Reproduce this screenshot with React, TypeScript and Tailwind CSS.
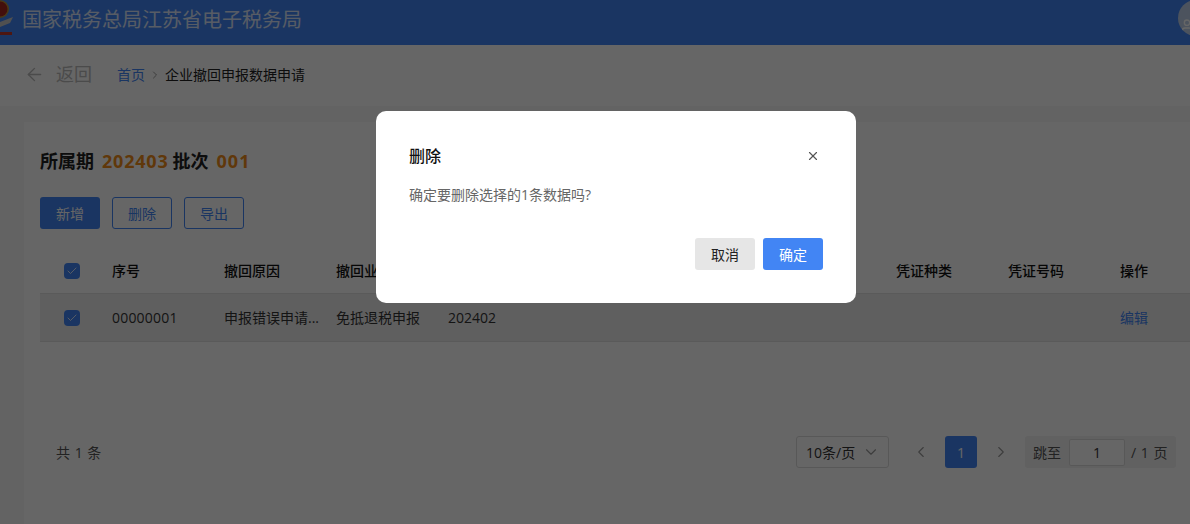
import { ArrowLeft, Check, ChevronDown, ChevronLeft, ChevronRight, User, X } from 'lucide-react';

const columns = [
  { title: '序号', width: 'w-[112px]' },
  { title: '撤回原因', width: 'w-[112px]' },
  { title: '撤回业务', width: 'w-[112px]' },
  { title: '', width: 'w-[448px]' },
  { title: '凭证种类', width: 'w-[112px]' },
  { title: '凭证号码', width: 'w-[112px]' },
  { title: '操作', width: 'w-[70px]' },
];

function Emblem() {
  return (
    <svg viewBox="0 0 22 38" className="h-[38px] w-[22px] shrink-0 self-start">
      <circle cx="0" cy="9" r="9" fill="#b8923a" />
      <circle cx="0" cy="9" r="7.5" fill="#a8261e" />
      <path d="M0 22 L13 17 L10 23 L0 27 Z" fill="#c9c9c9" />
      <path d="M0 32 h12 v3 H0 Z" fill="#c0392b" />
    </svg>
  );
}

function Checkbox() {
  return (
    <span className="flex h-4 w-4 items-center justify-center rounded-[4px] bg-[#4285f4]">
      <Check className="h-3 w-3 text-white/80" strokeWidth={2} />
    </span>
  );
}

export default function App() {
  return (
    <div className="relative h-[524px] w-[1190px] overflow-hidden bg-[#f8f8f8] font-['Open_Sans','Noto_Sans_CJK_SC',sans-serif] text-[14px] text-[#333]">
      <header className="flex h-[45px] justify-between bg-[#4285f4]">
        <div className="flex items-center">
          <Emblem />
          <span className="pb-2 font-['Noto_Sans_CJK_SC',sans-serif] text-[20px] text-white opacity-80">国家税务总局江苏省电子税务局</span>
        </div>
        <div className="mr-[-24px] flex h-9 w-9 items-center justify-center overflow-hidden rounded-full bg-[#bfd0ea]">
          <User className="h-4 w-4 -translate-x-[9px] translate-y-2 text-white" />
        </div>
      </header>

      <div className="flex h-[61px] items-center bg-white pb-[2px] pl-6">
        <ArrowLeft className="h-[21px] w-[21px] text-[#bbb]" strokeWidth={1.6} />
        <span className="ml-[11px] text-[18px] text-[#bbb]">返回</span>
        <span className="ml-[25px] text-[#4285f4]">首页</span>
        <ChevronRight className="mx-1 h-3 w-3 text-[#999]" />
        <span className="text-[#222]">企业撤回申报数据申请</span>
      </div>

      <main className="ml-6 mt-4 h-[402px] bg-white pl-4 pt-[26px]">
        <div className="flex h-[26px] items-center text-[18px] font-bold leading-[26px] text-[#222]">
          <span>所属期</span>
          <span className="ml-2 tracking-[0.8px] text-[#f08c1a]">202403</span>
          <span className="ml-1">批次</span>
          <span className="ml-2 tracking-[1px] text-[#f08c1a]">001</span>
        </div>

        <div className="mt-[23px] flex gap-3">
          <button className="h-8 w-[60px] rounded-[3px] bg-[#4285f4] text-white">新增</button>
          <button className="h-8 w-[60px] rounded-[3px] border border-[#4285f4] text-[#4285f4]">删除</button>
          <button className="h-8 w-[60px] rounded-[3px] border border-[#4285f4] text-[#4285f4]">导出</button>
        </div>

        <div className="mt-[19px]">
          <div className="flex h-[46px] items-center border-b border-[#e0e0e0] font-medium text-[#111]">
            <div className="w-[72px] pl-6">
              <Checkbox />
            </div>
            {columns.map((col, i) => (
              <div key={i} className={col.width}>
                {col.title}
              </div>
            ))}
          </div>
          <div className="flex h-[48px] items-center border-b border-[#e0e0e0] bg-[#ededed]">
            <div className="w-[72px] pl-6">
              <Checkbox />
            </div>
            <div className="w-[112px] tracking-[0.2px]">00000001</div>
            <div className="w-[112px]">申报错误申请...</div>
            <div className="w-[112px]">免抵退税申报</div>
            <div className="w-[448px]">202402</div>
            <div className="w-[224px]" />
            <div className="text-[#4285f4]">编辑</div>
          </div>
        </div>

        <div className="mt-[94px] flex h-8 items-center pl-4 pr-[14px]">
          <span className="text-[#555] [word-spacing:1px]">共 1 条</span>
          <div className="ml-auto flex h-8 w-[93px] items-center justify-between rounded-[3px] border border-[#ddd] pl-[9px] pr-2 text-[#333]">
            <span>10条/页</span>
            <ChevronDown className="h-[18px] w-[18px] text-[#999]" strokeWidth={1.5} />
          </div>
          <div className="ml-4 flex h-8 w-8 items-center justify-center">
            <ChevronLeft className="h-[18px] w-[18px] text-[#999]" strokeWidth={1.5} />
          </div>
          <div className="ml-2 flex h-8 w-8 items-center justify-center rounded-[3px] bg-[#4285f4] text-white">1</div>
          <div className="ml-2 flex h-8 w-8 items-center justify-center">
            <ChevronRight className="h-[18px] w-[18px] text-[#999]" strokeWidth={1.5} />
          </div>
          <div className="ml-2 flex h-8 w-[151px] items-center rounded-[3px] bg-[#f2f2f2] pl-2 text-[#555]">
            <span>跳至</span>
            <div className="ml-2 mr-[6px] flex h-[27px] w-[56px] items-center justify-center rounded-[2px] border border-[#ddd] bg-white text-[#333]">1</div>
            <span className="[word-spacing:1px]">/ 1 页</span>
          </div>
        </div>
      </main>

      {/* modal mask */}
      <div className="absolute inset-0 bg-black/60" />
      <div className="absolute left-[376px] top-[111px] h-[192px] w-[480px] rounded-[10px] bg-white pl-[33px] pr-[33px] pt-[33px]">
        <div className="flex items-center justify-between">
          <span className="text-[16px] font-medium text-[#111]">删除</span>
          <X className="mr-[3px] h-[14px] w-[14px] text-[#555]" />
        </div>
        <p className="mt-4 text-[#666]">确定要删除选择的1条数据吗?</p>
        <div className="mt-[33px] flex justify-end gap-2">
          <button className="h-8 w-[60px] rounded-[3px] bg-[#e6e6e6] text-[#222]">取消</button>
          <button className="h-8 w-[60px] rounded-[3px] bg-[#4285f4] text-white">确定</button>
        </div>
      </div>
    </div>
  );
}
